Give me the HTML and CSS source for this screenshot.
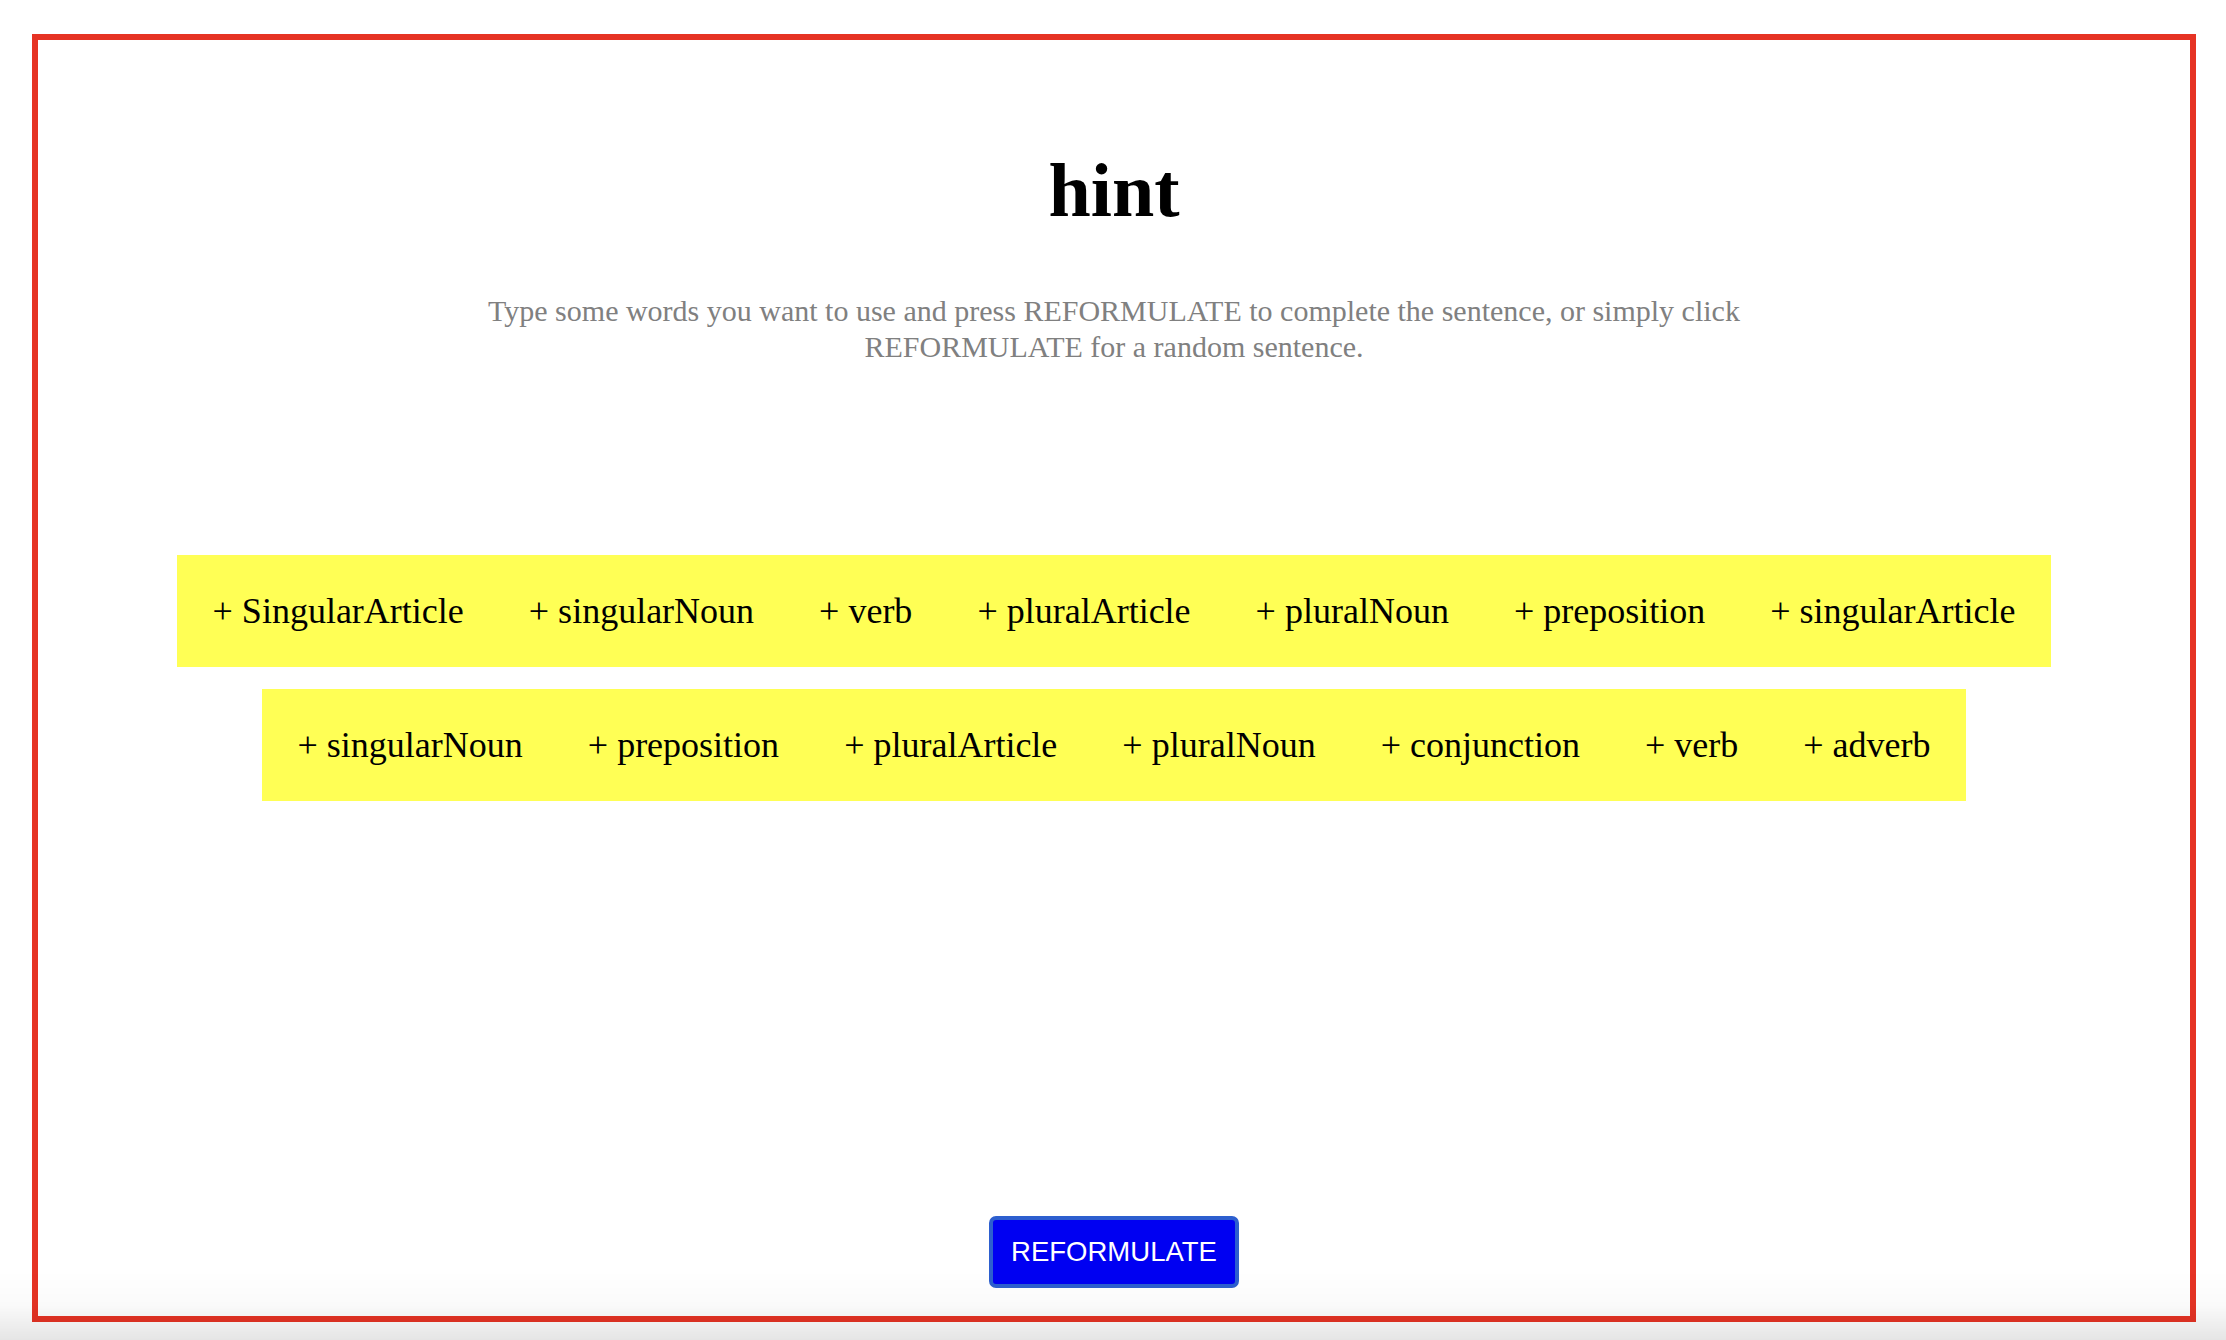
FILE: index.html
```html
<!DOCTYPE html>
<html lang="en">
<head>
<meta charset="utf-8">
<title>hint</title>
<link rel="stylesheet" href="styles.css">
</head>
<body>
<main class="frame">
  <h1 class="title">hint</h1>
  <p class="intro">Type some words you want to use and press REFORMULATE to complete the sentence, or simply click REFORMULATE for a random sentence.</p>
  <div class="rows">
    <div class="row">
      <span class="slot">+ SingularArticle</span>
      <span class="slot">+ singularNoun</span>
      <span class="slot">+ verb</span>
      <span class="slot">+ pluralArticle</span>
      <span class="slot">+ pluralNoun</span>
      <span class="slot">+ preposition</span>
      <span class="slot">+ singularArticle</span>
    </div>
    <div class="row">
      <span class="slot">+ singularNoun</span>
      <span class="slot">+ preposition</span>
      <span class="slot">+ pluralArticle</span>
      <span class="slot">+ pluralNoun</span>
      <span class="slot">+ conjunction</span>
      <span class="slot">+ verb</span>
      <span class="slot">+ adverb</span>
    </div>
  </div>
  <button class="go" type="button">REFORMULATE</button>
</main>
<div class="shade"></div>
</body>
</html>
```
FILE: styles.css
```css
html, body {
  margin: 0;
  background: #ffffff;
}
body {
  padding: 34px 30px 0 32px;
  font-family: "Liberation Serif", "Times New Roman", serif;
  color: #000;
}
.frame {
  box-sizing: border-box;
  height: 1288px;
  border: 6px solid #e63324;
  display: flex;
  flex-direction: column;
  align-items: center;
}
.title {
  margin: 106px 0 0;
  font-size: 76px;
  line-height: 88px;
  font-weight: bold;
}
.intro {
  margin: 59px 0 0;
  width: 1300px;
  text-align: center;
  font-size: 30px;
  line-height: 36px;
  color: #808080;
}
.rows {
  margin-top: 190px;
  display: flex;
  flex-direction: column;
  align-items: center;
  gap: 22px;
}
.row {
  display: flex;
  align-items: center;
  height: 112px;
  padding: 0 36px;
  gap: 65px;
  background: #ffff55;
  font-size: 36px;
  white-space: nowrap;
}
.go {
  margin: auto 0 28px;
  box-sizing: border-box;
  width: 250px;
  height: 72px;
  background: #0000f2;
  border: 4px solid #2d5fcf;
  border-radius: 7px;
  color: #ffffff;
  font-family: "Liberation Sans", Arial, sans-serif;
  font-size: 27.5px;
  padding: 0;
}
.shade {
  position: fixed;
  left: 0;
  right: 0;
  bottom: 0;
  height: 70px;
  pointer-events: none;
  background: linear-gradient(to bottom, rgba(0,0,0,0), rgba(0,0,0,0.02) 50%, rgba(0,0,0,0.1));
}
```
